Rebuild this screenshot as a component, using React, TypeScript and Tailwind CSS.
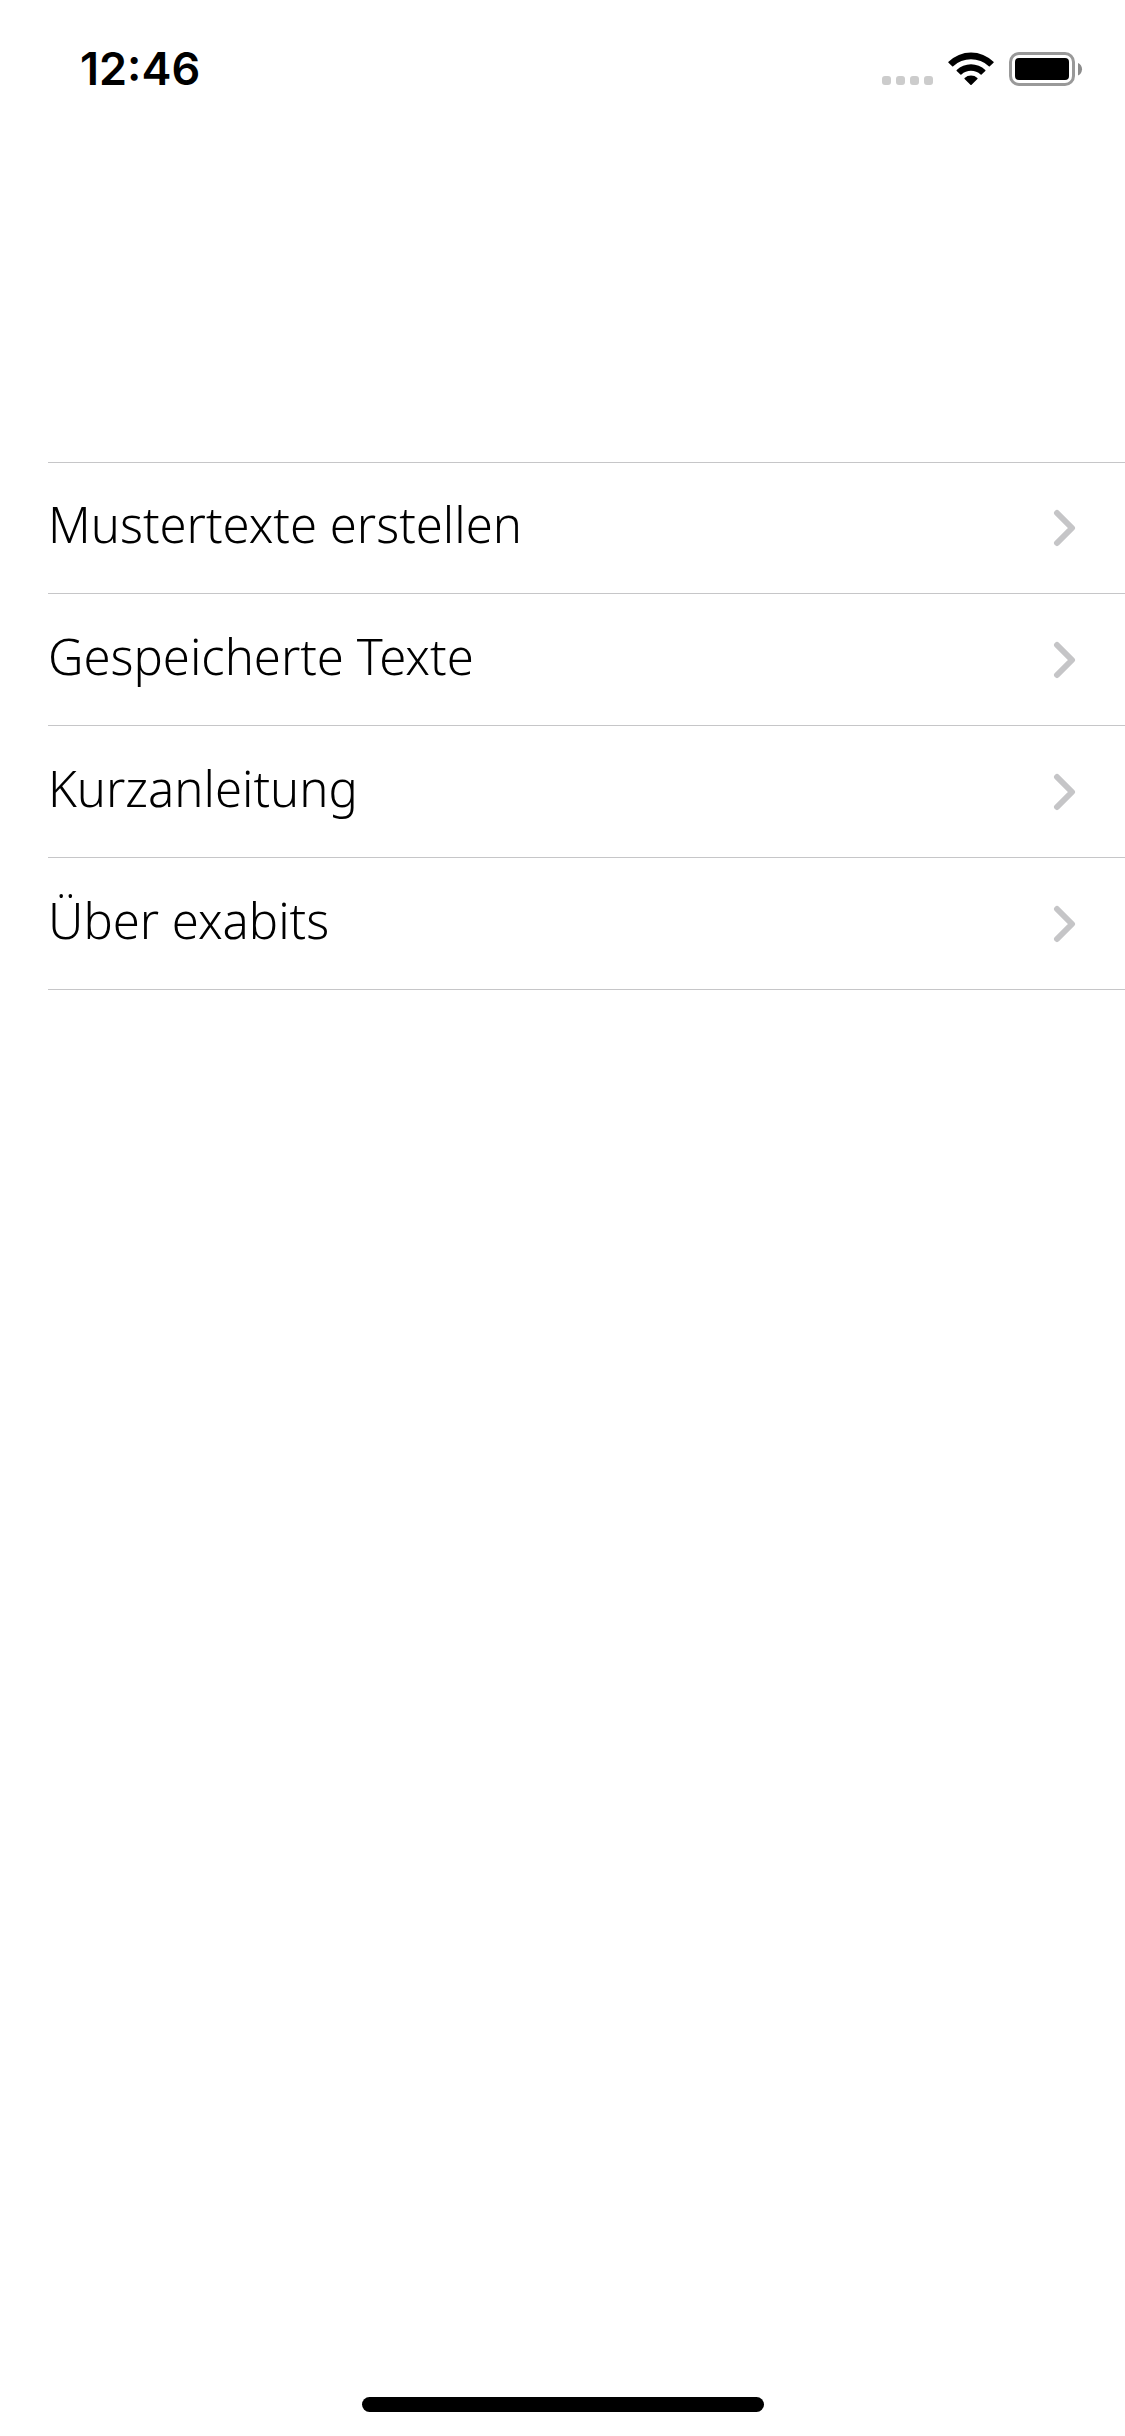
import React from "react";

const items = [
  { label: "Mustertexte erstellen", href: "#erstellen" },
  { label: "Gespeicherte Texte", href: "#gespeichert" },
  { label: "Kurzanleitung", href: "#anleitung" },
  { label: "Über exabits", href: "#ueber" },
];

const WifiIcon: React.FC = () => (
  <svg width="46" height="34" viewBox="0 0 46 34" fill="#000" aria-hidden="true">
    <path d="M0.5 9.8A32 32 0 0 1 45.5 9.8Q46 10.3 45.5 10.8L41.8 14.2Q41.3 14.6 40.8 14.2A26.5 26.5 0 0 0 5.2 14.2Q4.7 14.6 4.2 14.2L0.5 10.8Q0 10.3 0.5 9.8Z" />
    <path d="M8.7 18A20.5 20.5 0 0 1 37.3 18Q37.8 18.5 37.3 19L33.6 22.5Q33.1 22.9 32.6 22.5A14.5 14.5 0 0 0 13.4 22.5Q12.9 22.9 12.4 22.5L8.7 19Q8.2 18.5 8.7 18Z" />
    <path d="M16.6 25.9A9.5 9.5 0 0 1 29.4 25.9Q29.9 26.4 29.4 26.9L23.6 32.8Q23 33.4 22.4 32.8L16.6 26.9Q16.1 26.4 16.6 25.9Z" />
  </svg>
);

const BatteryIcon: React.FC = () => (
  <svg width="74" height="34" viewBox="0 0 74 34" aria-hidden="true">
    <rect x="1.5" y="1.5" width="63" height="31" rx="8.5" fill="none" stroke="#999" strokeWidth="3" />
    <rect x="6" y="6" width="54" height="22" rx="4" fill="#000" />
    <path d="M69 11a6.8 6.8 0 0 1 0 12.4Z" fill="#8c8c8c" />
  </svg>
);

const StatusBar: React.FC = () => (
  <header className="flex h-[132px] items-start justify-between pt-[52px] pr-[42px] pl-20">
    <time className="font-['Inter',sans-serif] text-[45px] leading-[34px] font-semibold">
      12:46
    </time>
    <div className="flex items-end">
      <div className="mr-[15px] flex gap-[5px] pb-px">
        <span className="size-[9px] rounded-[3px] bg-[#ccc]" />
        <span className="size-[9px] rounded-[3px] bg-[#ccc]" />
        <span className="size-[9px] rounded-[3px] bg-[#ccc]" />
        <span className="size-[9px] rounded-[3px] bg-[#ccc]" />
      </div>
      <div className="flex gap-[15px]">
        <WifiIcon />
        <BatteryIcon />
      </div>
    </div>
  </header>
);

const App: React.FC = () => {
  return (
    <div className="flex min-h-screen flex-col bg-white text-black">
      <StatusBar />

      <main className="flex-1 pt-[330px] pl-12">
        <nav aria-label="Menü">
          <ul className="border-t border-[#c6c6c8]">
            {items.map((item) => (
              <li key={item.href} className="h-[132px] border-b border-[#c6c6c8] first:h-[131px]">
                <a
                  href={item.href}
                  className="flex h-full items-center justify-between pr-[49px] font-['Noto_Sans',sans-serif] text-[49px] leading-[68px] font-light"
                >
                  <span className="pb-2">{item.label}</span>
                  <svg width="24" height="38" viewBox="0 0 24 38" fill="none" aria-hidden="true">
                    <path
                      d="M5 4L20 19L5 34"
                      stroke="#c5c5c7"
                      strokeWidth="6"
                      strokeLinecap="round"
                      strokeLinejoin="round"
                    />
                  </svg>
                </a>
              </li>
            ))}
          </ul>
        </nav>
      </main>

      <footer className="flex justify-center pb-6">
        <div className="h-[15px] w-[402px] rounded-full bg-black" />
      </footer>
    </div>
  );
};

export default App;
